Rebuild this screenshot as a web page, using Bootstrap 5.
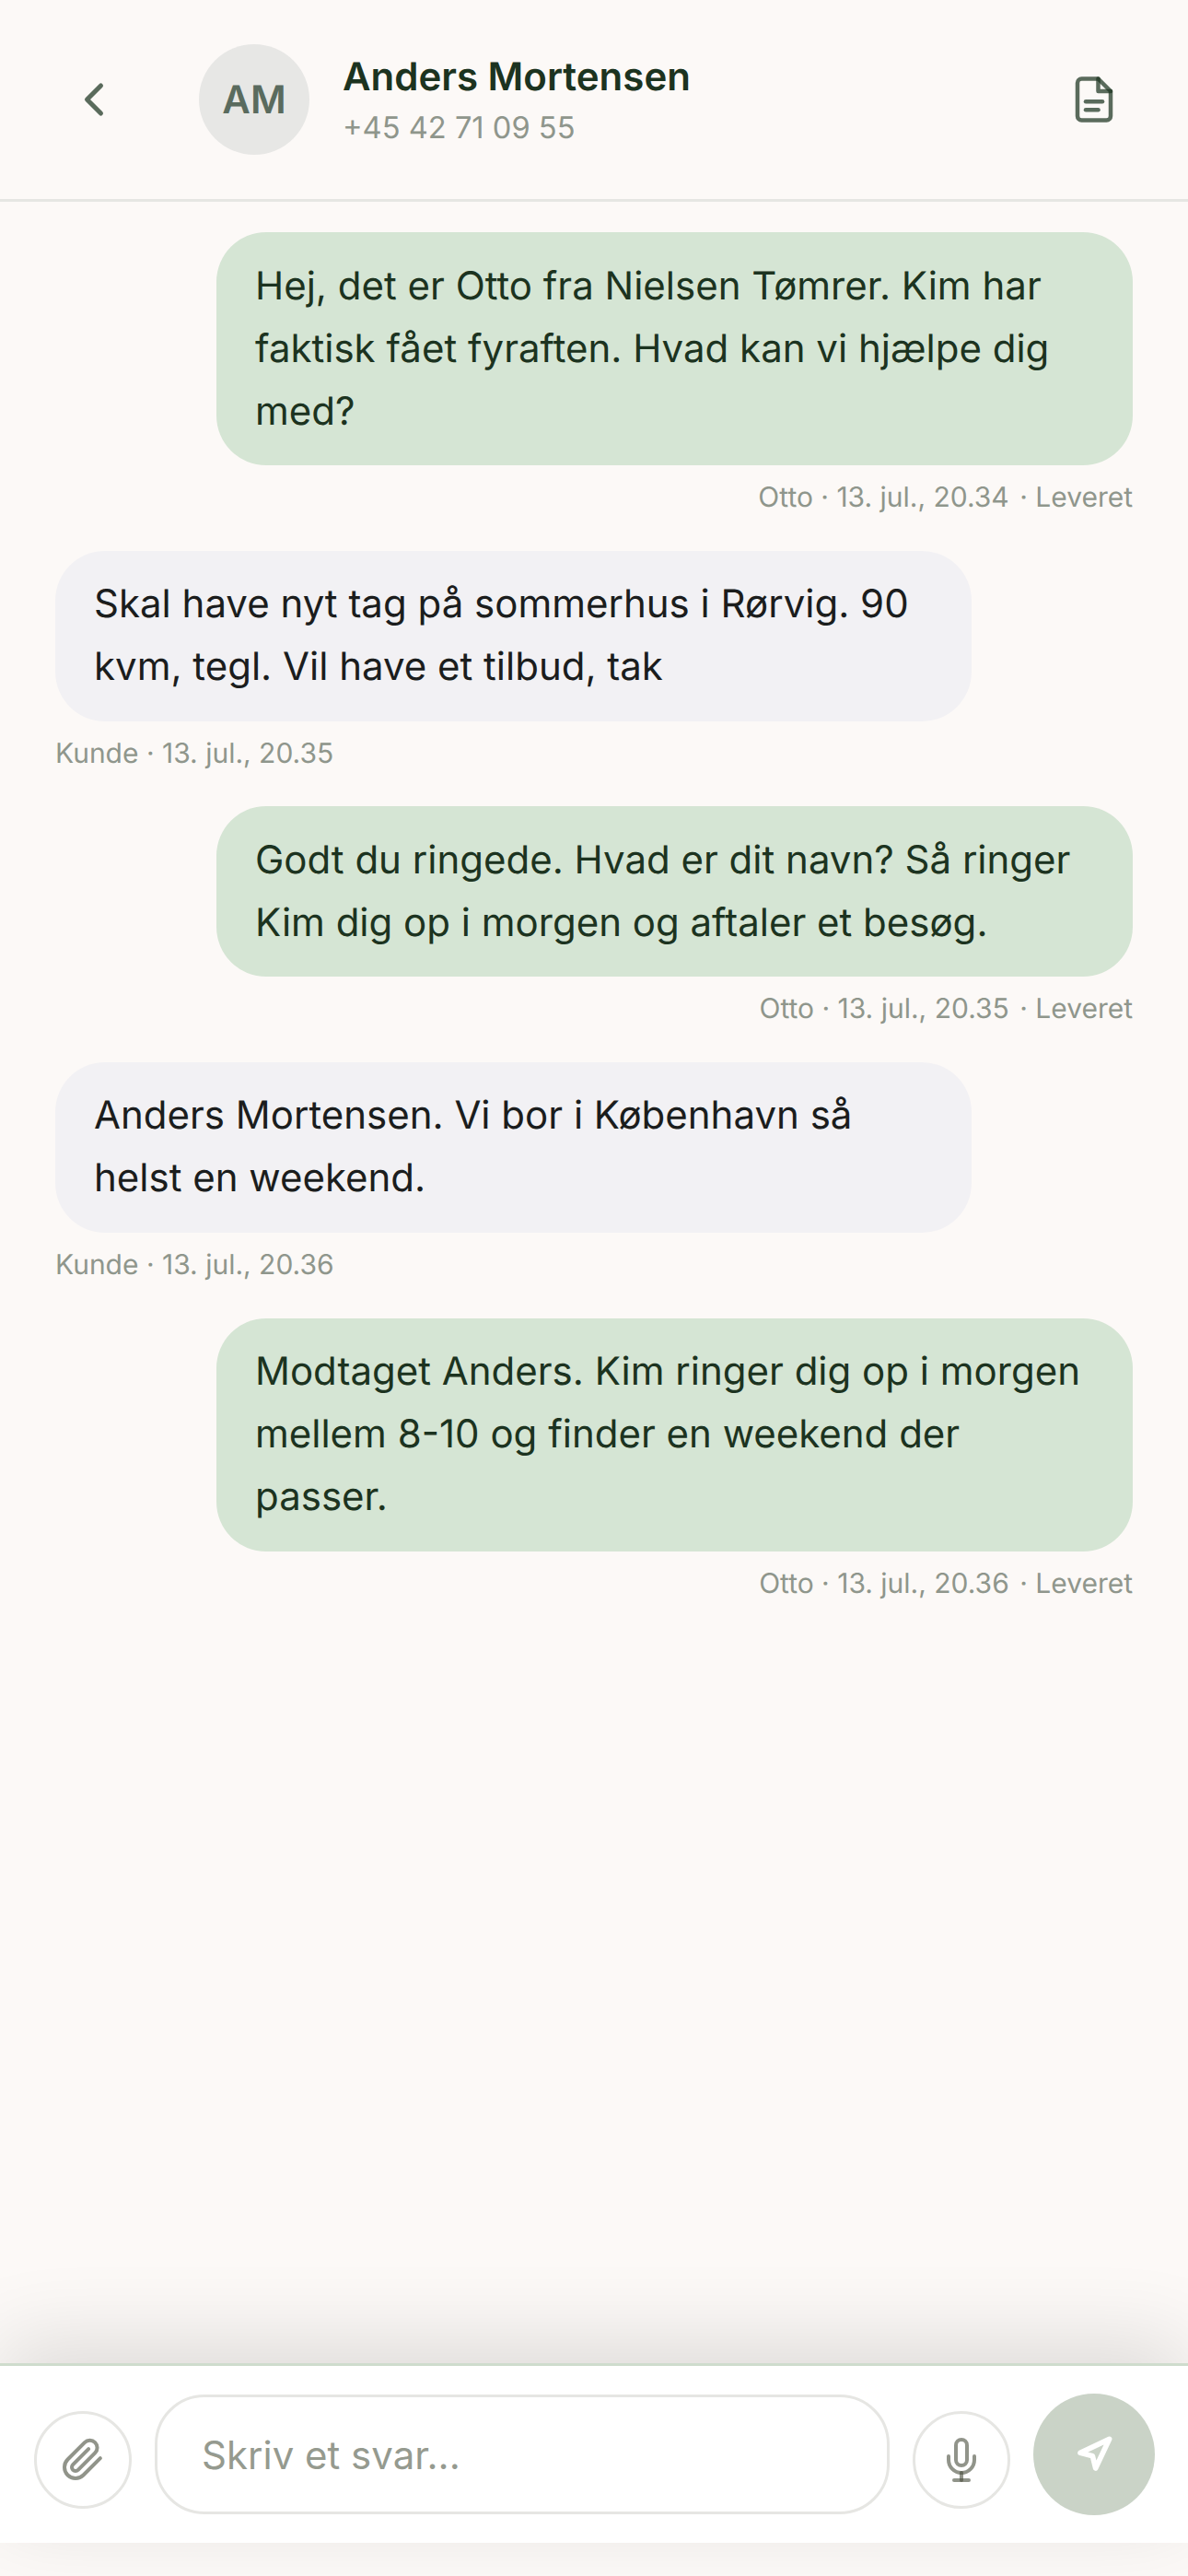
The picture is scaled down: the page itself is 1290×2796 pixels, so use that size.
<!DOCTYPE html>
<html lang="da">
<head>
<meta charset="utf-8">
<title>Anders Mortensen</title>
<link href="https://cdn.jsdelivr.net/npm/bootstrap@5.3.0/dist/css/bootstrap.min.css" rel="stylesheet">
<style>
html,body{height:2796px;overflow:hidden}
body{background:#fcf9f7;font-family:Inter,"Liberation Sans",sans-serif;color:#1f2a1f;text-rendering:geometricPrecision}
.shell{height:2796px}
.topbar{height:219px;border-bottom:3px solid #e6e6e3;padding-left:72px;padding-right:72px}
.headicon{width:60px;height:60px;stroke:#1c3320;stroke-opacity:.72;fill:none;stroke-width:2;stroke-linecap:round;stroke-linejoin:round}
.backicon{margin-right:84px}
.docglyph{width:54px;height:54px;margin-right:3px}
.avatarbox{width:120px;height:120px;background:#e7e7e5;color:#5a6b5e;font-size:42px;font-weight:600;margin-right:36px}
.personname{font-size:42px;line-height:52px;font-weight:600;color:#1c3320}
.personphone{font-size:32.65px;line-height:40px;color:#8f968c;margin-top:8px}
.thread{padding:33px 60px 0}
.msgrow{margin-bottom:39.67px}
.bubble{width:995px;padding:24.5px 42px;font-size:42px;line-height:68px;border-radius:54px}
.bubble-out{background:#d5e5d4;color:#1c3320}
.bubble-in{background:#f2f1f4;color:#1b1d1d}
.metaline{font-size:30px;line-height:36px;color:#8f968c;margin-top:17px}
.deliverytag{margin-left:3px}
.composer{height:195px;background:#fff;border-top:3px solid #cfdccd;box-shadow:0 -24px 90px rgba(0,0,0,.12);padding:30px 36px 30px 37px;margin-bottom:36px;gap:25px;position:relative}
.roundbtn{width:106px;height:106px;border:3px solid #e6e6e3;background:#fff;margin-bottom:7px;padding:0}
.roundbtn svg{width:48px;height:48px;stroke:#484d3c;stroke-opacity:.6;fill:none;stroke-width:2;stroke-linecap:round;stroke-linejoin:round}
.replybox{height:130px;margin-bottom:1px;border:3px solid #e6e6e3;border-radius:54px;padding:0 48px;font-size:42px;color:#1c3320;background:#fff;box-shadow:none}
.replybox::placeholder{color:#959a8f;opacity:1}
.sendbtn{width:132px;height:132px;background:#cad3c7;padding:0;border:0}
.sendbtn svg{width:40px;height:40px;stroke:#fff;fill:none;stroke-width:3.4;stroke-linecap:round;stroke-linejoin:round}
</style>
</head>
<body>
<div class="shell d-flex flex-column">
  <header class="topbar d-flex align-items-center flex-shrink-0">
    <svg class="headicon backicon flex-shrink-0" viewBox="0 0 24 24"><path d="m15 18-6-6 6-6"/></svg>
    <div class="avatarbox rounded-circle d-flex align-items-center justify-content-center flex-shrink-0">AM</div>
    <div class="flex-grow-1">
      <div class="personname">Anders Mortensen</div>
      <div class="personphone">+45 42 71 09 55</div>
    </div>
    <svg class="headicon docglyph flex-shrink-0" viewBox="0 0 24 24"><path d="M14 2H6a2 2 0 0 0-2 2v16a2 2 0 0 0 2 2h12a2 2 0 0 0 2-2V8z"/><path d="M14 2v6h6"/><path d="M16 13H8"/><path d="M14 17H8"/></svg>
  </header>
  <main class="thread flex-grow-1">
    <div class="msgrow d-flex flex-column align-items-end">
      <div class="bubble bubble-out">Hej, det er Otto fra Nielsen Tømrer. Kim har faktisk fået fyraften. Hvad kan vi hjælpe dig med?</div>
      <div class="metaline">Otto · 13. jul., 20.34 <span class="deliverytag">· Leveret</span></div>
    </div>
    <div class="msgrow d-flex flex-column align-items-start">
      <div class="bubble bubble-in">Skal have nyt tag på sommerhus i Rørvig. 90 kvm, tegl. Vil have et tilbud, tak</div>
      <div class="metaline">Kunde · 13. jul., 20.35</div>
    </div>
    <div class="msgrow d-flex flex-column align-items-end">
      <div class="bubble bubble-out">Godt du ringede. Hvad er dit navn? Så ringer Kim dig op i morgen og aftaler et besøg.</div>
      <div class="metaline">Otto · 13. jul., 20.35 <span class="deliverytag">· Leveret</span></div>
    </div>
    <div class="msgrow d-flex flex-column align-items-start">
      <div class="bubble bubble-in">Anders Mortensen. Vi bor i København så helst en weekend.</div>
      <div class="metaline">Kunde · 13. jul., 20.36</div>
    </div>
    <div class="msgrow d-flex flex-column align-items-end">
      <div class="bubble bubble-out">Modtaget Anders. Kim ringer dig op i morgen mellem 8-10 og finder en weekend der passer.</div>
      <div class="metaline">Otto · 13. jul., 20.36 <span class="deliverytag">· Leveret</span></div>
    </div>
  </main>
  <footer class="composer d-flex align-items-end flex-shrink-0">
    <button type="button" class="roundbtn btn rounded-circle d-flex align-items-center justify-content-center flex-shrink-0" aria-label="Vedhæft">
      <svg viewBox="0 0 24 24"><path d="M21.44 11.05l-9.19 9.19a6 6 0 0 1-8.49-8.49l9.19-9.19a4 4 0 0 1 5.66 5.66l-9.2 9.19a2 2 0 0 1-2.83-2.83l8.49-8.48"/></svg>
    </button>
    <input type="text" class="replybox form-control flex-grow-1" placeholder="Skriv et svar...">
    <button type="button" class="roundbtn btn rounded-circle d-flex align-items-center justify-content-center flex-shrink-0" aria-label="Mikrofon">
      <svg viewBox="0 0 24 24"><path d="M12 1a3 3 0 0 0-3 3v8a3 3 0 0 0 6 0V4a3 3 0 0 0-3-3z"/><path d="M19 10v2a7 7 0 0 1-14 0v-2"/><path d="M12 19v4"/><path d="M8 23h8"/></svg>
    </button>
    <button type="button" class="sendbtn btn rounded-circle d-flex align-items-center justify-content-center flex-shrink-0" aria-label="Send">
      <svg viewBox="0 0 24 24"><path d="M3 11 22 2l-9 19-2-8-8-2z"/></svg>
    </button>
  </footer>
</div>
<script src="https://cdn.jsdelivr.net/npm/bootstrap@5.3.0/dist/js/bootstrap.bundle.min.js"></script>
</body>
</html>
